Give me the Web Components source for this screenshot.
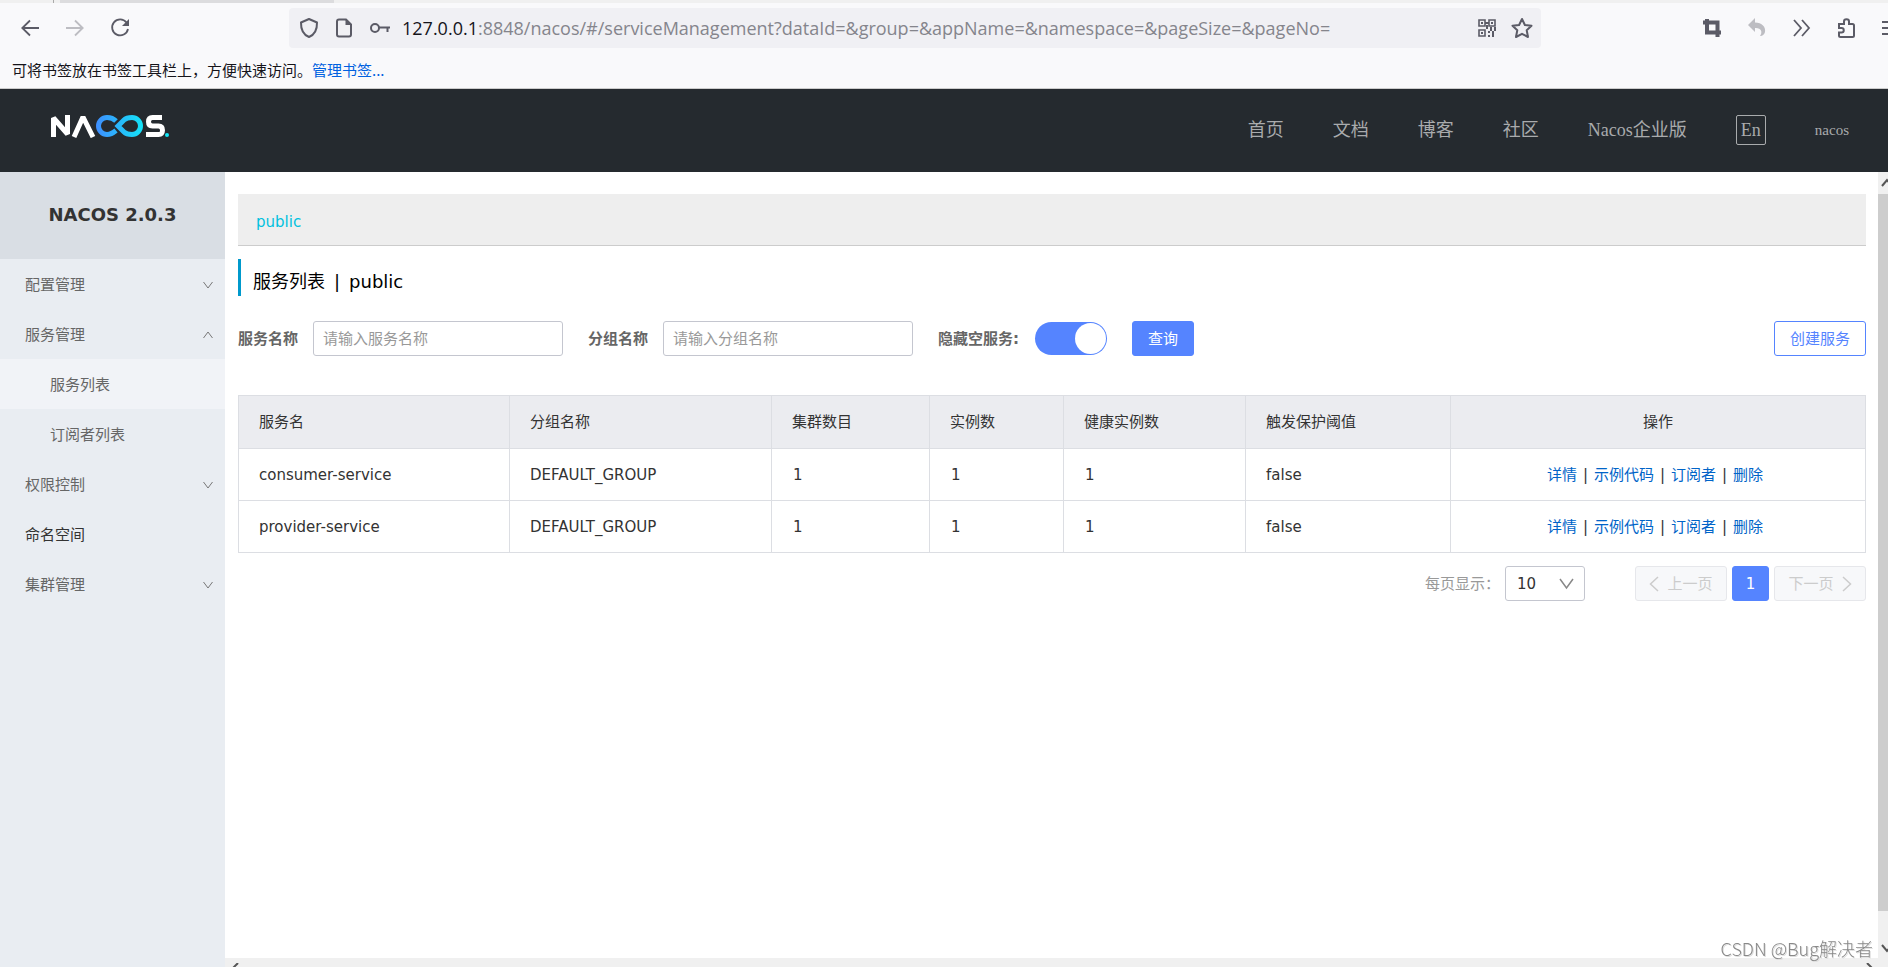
<!DOCTYPE html>
<html lang="zh-CN">
<head>
<meta charset="utf-8">
<title>Nacos</title>
<style>
html, body { height: 100%; }
body { margin: 0; overflow: hidden; font: 15px/20px "DejaVu Sans", "Noto Sans CJK SC", sans-serif; color: #333; background: #fff; }
</style>
</head>
<body>
<nacos-app></nacos-app>

<template id="t-browser">
<style>
:host { display: block; background: #f9f9fb; border-bottom: 1px solid #ccc; font-family: "Noto Sans CJK SC", sans-serif; }
svg { display: block; fill: none; stroke: #5b5b66; stroke-width: 2; flex: none; overflow: visible; }
.tabs { height: 3px; background: #f0f0f0; display: flex; }
.tabs i { width: 53px; border-right: 1px solid #aaa; }
.tabs b { width: 274px; margin-left: 6px; background: #dcdcde; }
.bar { display: flex; align-items: center; height: 50px; }
button { border: 0; padding: 0; background: none; display: block; }
.nav { display: flex; align-items: center; gap: 27px; padding-left: 21px; width: 289px; box-sizing: border-box; }
.url { display: flex; align-items: center; flex: 0 1 1252px; height: 40px; border-radius: 4px; background: #f0f0f4; padding: 0 8px 0 11px; box-sizing: border-box; }
.url .icons { display: flex; gap: 17px; align-items: center; margin-right: 12px; }
.address { flex: 1; font: 18px/24px "Open Sans", "Noto Sans", sans-serif; color: #85858c; white-space: nowrap; }
.address span { color: #15141a; }
.end { display: flex; gap: 15px; }
.tools { margin-left: auto; display: flex; align-items: center; gap: 25px; }
.marks { display: flex; height: 35px; line-height: 33px; padding-left: 12px; color: #15141a; }
a { color: #0061e0; text-decoration: none; }
</style>
<div class="tabs"><i></i><b></b></div>
<div class="bar">
  <div class="nav">
    <button aria-label="后退"><svg width="18" height="18"><path d="M18 9H1M9 1.500L1.300 9L9 16.500" stroke-width="1.800"/></svg></button>
    <button aria-label="前进"><svg width="18" height="18" style="stroke:#bdbdc2"><path d="M0 9H17M9 1.500L16.700 9L9 16.500" stroke-width="1.800"/></svg></button>
    <button aria-label="刷新"><svg width="18" height="18"><path d="M15.500 3.500A8 8 0 1 0 17 10" stroke-width="1.800"/><path d="M18 0V7H11Z" fill="#5b5b66" stroke="none"/></svg></button>
  </div>
  <div class="url">
    <div class="icons">
      <svg width="18" height="20"><path d="M9 1L17 4.500C17.200 12 14 17 9 19C4 17 .8 12 1 4.500Z" stroke-linejoin="round"/></svg>
      <svg width="18" height="20"><path d="M4 1.500H11L16 6.500V16.500Q16 18.500 14 18.500H4Q2 18.500 2 16.500V3.500Q2 1.500 4 1.500Z"/><path d="M10.500 1V7H16.500Z" fill="#5b5b66" stroke="none"/></svg>
      <svg width="20" height="20"><circle cx="5" cy="10" r="4"/><path d="M9 9.500H20M17.500 10V14"/></svg>
    </div>
    <div class="address"><span>127.0.0.1</span>:8848/nacos/#/serviceManagement?dataId=&amp;group=&amp;appName=&amp;namespace=&amp;pageSize=&amp;pageNo=</div>
    <div class="end">
      <svg width="18" height="20"><path d="M1 2H7V8H1ZM11 2H17V8H11ZM1 12H7V18H1Z" stroke-width="1.600"/><path d="M3 5H5M13 5H15M3 15H5M7 5H11M9 7V11" stroke-width="2"/><path d="M8 10H18M10 14H18M10 18H18" stroke-dasharray="2 2"/><path d="M10 12H18M12 16H18" stroke-dasharray="2 2" stroke-dashoffset="2"/></svg>
      <svg width="22" height="20"><path d="M11 1L13.900 7L20.500 7.800L15.700 12.300L17 19L11 15.800L5 19L6.300 12.300L1.500 7.800L8.100 7Z" stroke-linejoin="round"/></svg>
    </div>
  </div>
  <div class="tools">
    <svg width="20" height="20"><path d="M1 4.500H15.500V19M5 1V14.500H19" stroke-width="4"/></svg>
    <svg width="20" height="20"><path d="M1 7L8 0V4.500C15 4.500 19 9 18 14C17.500 16 16 18 13 18C16 14 14 9.500 8 10V14Z" fill="#bdbdc2" stroke="none"/></svg>
    <svg width="20" height="20"><path d="M2 2L9 10L2 18M10 2L17 10L10 18" stroke-width="1.800"/></svg>
    <svg width="20" height="20"><path d="M2 6H7V3.500C7 .5 12 .5 12 3.500V6H15.500Q17 6 17 7.500V17.500Q17 19 15.500 19H3.500Q2 19 2 17.500V14.500H4.500C7.500 14.500 7.500 10 4.500 10H2Z"/></svg>
    <svg width="6" height="20"><path d="M0 4H6M0 10H6M0 16H6"/></svg>
  </div>
</div>
<div class="marks"><span>可将书签放在书签工具栏上，方便快速访问。</span><a href="#">管理书签...</a></div>
</template>

<template id="t-header">
<style>
:host { display: flex; align-items: center; box-sizing: border-box; height: 83px; background: #252a2f; padding: 0 39px 2px 50px; font-family: "Liberation Serif", "Noto Sans CJK SC", serif; color: #a9abad; }
nav { margin-left: auto; display: flex; align-items: center; gap: 49px; font-size: 18px; }
a { color: inherit; text-decoration: none; }
button { font: inherit; color: inherit; background: none; border: 1px solid #a9abad; border-radius: 2px; width: 30px; height: 30px; padding: 0; }
.user { font-size: 15px; }
svg { display: block; margin-bottom: 8px; }
</style>
<svg width="120" height="24" viewBox="0 0 120 24" fill="none" stroke-width="5" role="img" aria-label="NACOS">
  <defs><linearGradient id="g" gradientUnits="userSpaceOnUse" x1="45" y1="0" x2="95" y2="0"><stop offset="0" stop-color="#3f8cff"/><stop offset="1" stop-color="#12e7f7"/></linearGradient></defs>
  <path d="M3.500 23V4L17.500 20V1" stroke="#fff" stroke-linejoin="bevel"/>
  <path d="M24 23L33 3L43 23" stroke="#fff" stroke-linejoin="bevel"/>
  <path d="M66 7C63 4 60 3.500 57 3.500A8.500 8.500 0 0 0 57 20.500C60 20.500 63 19 66 16.500" stroke="url(#g)"/>
  <path d="M68 12L74 6C76 4 79 3.500 82 3.500A8.500 8.500 0 0 1 82 20.500C79 20.500 76 20 74 18Z" stroke="url(#g)"/>
  <path d="M112 3.500H102.500Q98.500 3.500 98.500 7.700T102.500 12H108.500Q112.500 12 112.500 16.300T108.500 20.500H96" stroke="#fff"/>
  <circle cx="117" cy="21" r="2" fill="#12e7f7"/>
</svg>
<nav><a href="#">首页</a><a href="#">文档</a><a href="#">博客</a><a href="#">社区</a><a href="#">Nacos企业版</a><button>En</button><a class="user" href="#">nacos</a></nav>
</template>

<template id="t-side">
<style>
:host { display: block; flex: 0 0 225px; background: #e9edf2; }
h1 { margin: 0; height: 87px; line-height: 85px; text-align: center; font-size: 18px; background: #d9dee4; color: #333; }
</style>
<h1>NACOS 2.0.3</h1>
<nav>
<side-item arrow="down">配置管理</side-item>
<side-item arrow="up">服务管理</side-item>
<side-item sub active>服务列表</side-item>
<side-item sub>订阅者列表</side-item>
<side-item arrow="down">权限控制</side-item>
<side-item strong>命名空间</side-item>
<side-item arrow="down">集群管理</side-item>
</nav>
</template>

<template id="t-item">
<style>
:host { display: block; color: #666; }
:host([active]) { background: #f1f3f7; }
:host([strong]) { color: #333; }
a { display: flex; align-items: center; justify-content: space-between; box-sizing: border-box; height: 50px; padding: 2px 12px 0 25px; color: inherit; text-decoration: none; }
:host([sub]) a { padding-left: 50px; }
svg { display: none; fill: none; stroke: #777; }
:host([arrow]) svg { display: block; }
:host([arrow="up"]) svg { transform: rotate(180deg); }
</style>
<a href="#"><slot></slot><svg width="10" height="8"><path d="M.5 1L5 7L9.500 1"/></svg></a>
</template>

<template id="t-field">
<style>
:host { display: flex; align-items: center; gap: 15px; }
label { font-weight: 700; color: #666; white-space: nowrap; }
input { box-sizing: border-box; width: 250px; height: 35px; border: 1px solid #c4c6cf; border-radius: 3px; padding: 0 9px; font: inherit; background: #fff; }
input::placeholder { color: #999; opacity: 1; }
</style>
<label for="f"></label><input id="f" type="text">
</template>

<template id="t-switch">
<style>
:host { display: flex; align-items: center; gap: 16px; }
label { font-weight: 700; color: #666; white-space: nowrap; }
input { appearance: none; margin: 0; width: 72px; height: 33px; border-radius: 17px; background: #5584ff; display: flex; justify-content: flex-end; padding: 1px; box-sizing: border-box; }
input::before { content: ""; width: 31px; height: 31px; border-radius: 50%; background: #fff; }
</style>
<label for="s"><slot></slot></label><input id="s" type="checkbox" role="switch" checked>
</template>

<template id="t-table">
<style>
:host { display: block; }
table { width: 100%; table-layout: fixed; border-collapse: collapse; }
th, td { border: 1px solid #dcdee3; padding: 0 20px; height: 51px; font-weight: 400; text-align: left; white-space: nowrap; color: #333; }
th { background: #ebecf0; height: 52px; }
th:last-child, td:last-child { text-align: center; padding: 0; }
td:last-child { padding-right: 6px; }
td.n { padding-left: 21px; }
a { color: #0064c8; text-decoration: none; }
td span { margin: 0 6px; }
</style>
<table>
<colgroup><col style="width:271px"><col style="width:262px"><col style="width:158px"><col style="width:134px"><col style="width:182px"><col style="width:205px"><col></colgroup>
<thead><tr><th>服务名</th><th>分组名称</th><th>集群数目</th><th>实例数</th><th>健康实例数</th><th>触发保护阈值</th><th>操作</th></tr></thead>
<tbody></tbody>
</table>
</template>

<template id="t-pager">
<style>
:host { display: flex; justify-content: flex-end; align-items: center; gap: 5px; }
label { color: #999; }
.size { position: relative; margin-right: 45px; }
select { appearance: none; box-sizing: border-box; width: 80px; height: 35px; padding: 0 11px; border: 1px solid #c4c6cf; border-radius: 3px; background: #fff; font: inherit; color: #333; display: block; }
.size svg { position: absolute; right: 11px; top: 12px; stroke: #888; pointer-events: none; }
svg { fill: none; stroke: #ccc; stroke-width: 1.500; flex: none; }
button { box-sizing: border-box; width: 92px; height: 35px; padding: 0; display: flex; align-items: center; justify-content: center; gap: 8px; border: 1px solid #e6e7eb; border-radius: 3px; background: #f7f8fa; color: #ccc; font: inherit; }
button.on { width: 37px; background: #5584ff; border-color: #5584ff; color: #fff; }
</style>
<label for="n">每页显示：</label>
<div class="size"><select id="n"><option>10</option></select><svg width="15" height="12"><path d="M1 1L7.500 10L14 1"/></svg></div>
<button disabled><svg width="10" height="16"><path d="M9 1L1.500 8L9 15"/></svg>上一页</button>
<button class="on">1</button>
<button disabled>下一页<svg width="10" height="16"><path d="M1 1L8.500 8L1 15"/></svg></button>
</template>

<template id="t-main">
<style>
:host { display: grid; flex: 1; min-width: 0; grid-template: 1fr 9px / 1fr 10px; background: #fff; }
main { padding: 22px 12px 0 13px; min-width: 0; }
.ns { height: 51px; line-height: 56px; background: #eee; border-bottom: 1px solid #ccc; padding-left: 18px; }
.ns a { color: #00c1de; text-decoration: none; }
h2 { display: flex; gap: 9px; margin: 13px 0 25px; height: 37px; line-height: 46px; border-left: 3px solid #09c; padding-left: 12px; font-size: 18px; font-weight: 400; color: #000; }
form { display: flex; align-items: center; gap: 25px; margin-bottom: 39px; }
button { box-sizing: border-box; height: 35px; border: 1px solid #5584ff; border-radius: 3px; font: inherit; background: #5584ff; color: #fff; padding: 0; width: 62px; }
button.create { width: 92px; margin-left: auto; background: #fff; color: #5584ff; }
page-nav { margin-top: 13px; }
svg { display: block; fill: none; stroke: #555; stroke-width: 2; }
.v { background: #f0f0f0; display: grid; grid-template-rows: 22px 1fr 47px; overflow: hidden; }
.v i { background: #cdcdcd; }
.v svg { margin: 6px 0 0 3px; }
.v svg:last-child { margin-top: 32px; }
.h { grid-column: 1 / 3; background: #f0f0f0; display: flex; justify-content: space-between; overflow: hidden; padding: 5px 14px 0 6px; }
.mark { position: fixed; right: 15px; bottom: 7px; font: 300 18px/24px "Noto Sans CJK SC", sans-serif; color: #888; text-shadow: 1px 1px 0 #ddd; }
</style>
<main>
<div class="ns"><a href="#">public</a></div>
<h2><span>服务列表</span><span>|</span><span>public</span></h2>
<form>
<text-field label="服务名称" placeholder="请输入服务名称"></text-field>
<text-field label="分组名称" placeholder="请输入分组名称"></text-field>
<toggle-switch>隐藏空服务:</toggle-switch>
<button type="button">查询</button>
<button type="button" class="create">创建服务</button>
</form>
<service-table></service-table>
<page-nav></page-nav>
</main>
<div class="v"><svg width="10" height="10"><path d="M1 8L6 2L11 8"/></svg><i></i><svg width="10" height="10"><path d="M1 2L6 8L11 2"/></svg></div>
<div class="h"><svg width="8" height="10"><path d="M7 0L1 6L7 12"/></svg><svg width="8" height="10"><path d="M1 0L7 6L1 12"/></svg></div>
<div class="mark">CSDN @Bug解决者</div>
</template>

<template id="t-app">
<style>
:host { display: flex; flex-direction: column; min-height: 100vh; }
.body { display: flex; flex: 1; }
</style>
<browser-bar></browser-bar>
<site-header></site-header>
<div class="body"><side-menu></side-menu><service-page></service-page></div>
</template>

<script>
function define(name, id, setup) {
  customElements.define(name, class extends HTMLElement {
    constructor() {
      super();
      this.attachShadow({ mode: "open" }).append(document.getElementById(id).content.cloneNode(true));
    }
    connectedCallback() { if (setup) setup(this, this.shadowRoot); }
  });
}
define("browser-bar", "t-browser");
define("site-header", "t-header");
define("side-item", "t-item");
define("side-menu", "t-side");
define("text-field", "t-field", (el, root) => {
  root.querySelector("label").textContent = el.getAttribute("label");
  root.querySelector("input").placeholder = el.getAttribute("placeholder");
});
define("toggle-switch", "t-switch");
define("service-table", "t-table", (el, root) => {
  const actions = ["详情", "示例代码", "订阅者", "删除"].map(t => `<a href="#">${t}</a>`).join("<span>|</span>");
  root.querySelector("tbody").innerHTML = ["consumer-service", "provider-service"].map(n =>
    `<tr><td>${n}</td><td>DEFAULT_GROUP</td><td class="n">1</td><td class="n">1</td><td class="n">1</td><td>false</td><td>${actions}</td></tr>`).join("");
});
define("page-nav", "t-pager");
define("service-page", "t-main");
define("nacos-app", "t-app");
</script>
</body>
</html>
